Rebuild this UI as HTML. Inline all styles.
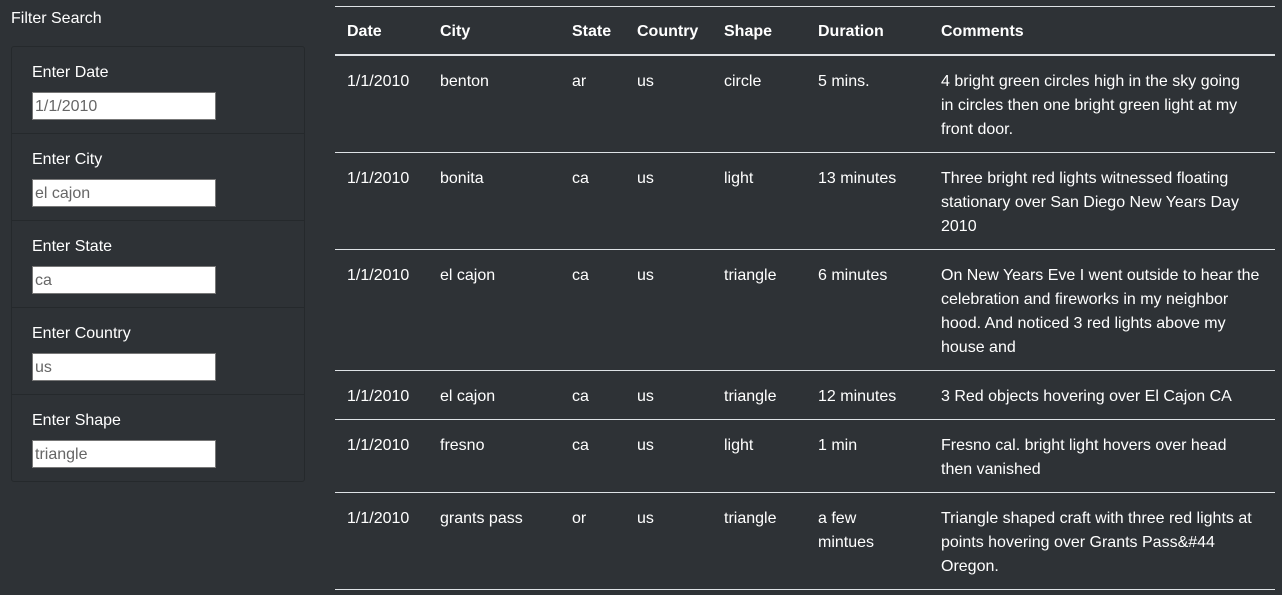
<!DOCTYPE html>
<html><head><style>
body{margin:0;background:#2e3236;font-family:"Liberation Sans",Helvetica,Arial,sans-serif;color:#fff;width:1282px;height:595px;overflow:hidden;position:relative}
.title{position:absolute;left:11px;top:10px;font-size:16px}
.panel{position:absolute;left:11px;top:46px;width:292px;height:434px;border:1px solid #25292c;border-radius:3px}
.grp{height:86px;border-bottom:1px solid #25292c;position:relative}
.grp:last-child{border-bottom:none}
.grp label{position:absolute;left:20px;top:17px;font-size:16px}
.grp .in{position:absolute;left:20px;top:45px;width:180px;height:26px;background:#fff;border:1px solid #777;color:#666;font-size:16px;line-height:27px;padding-left:2px}
table{position:absolute;left:335px;top:6px;width:940px;border-collapse:collapse;font-size:16px;border-top:1px solid #dee2e6}
th{text-align:left;font-weight:bold;padding:2px 11px 0 12px;height:45px;border-bottom:2px solid #dee2e6}
td{vertical-align:top;padding:14px 11px 10px 12px;line-height:24px;border-bottom:1px solid #dee2e6;white-space:nowrap}
</style></head><body>
<div class="title">Filter Search</div>
<div class="panel">
<div class="grp"><label>Enter Date</label><div class="in">1/1/2010</div></div>
<div class="grp"><label>Enter City</label><div class="in">el cajon</div></div>
<div class="grp"><label>Enter State</label><div class="in">ca</div></div>
<div class="grp"><label>Enter Country</label><div class="in">us</div></div>
<div class="grp"><label>Enter Shape</label><div class="in">triangle</div></div>
</div>
<table>
<colgroup><col style="width:93px"><col style="width:132px"><col style="width:65px"><col style="width:87px"><col style="width:94px"><col style="width:123px"><col></colgroup>
<tr><th>Date</th><th>City</th><th>State</th><th>Country</th><th>Shape</th><th>Duration</th><th>Comments</th></tr>
<tr><td>1/1/2010</td><td>benton</td><td>ar</td><td>us</td><td>circle</td><td>5 mins.</td><td>4 bright green circles high in the sky going<br>in circles then one bright green light at my<br>front door.</td></tr>
<tr><td>1/1/2010</td><td>bonita</td><td>ca</td><td>us</td><td>light</td><td>13 minutes</td><td>Three bright red lights witnessed floating<br>stationary over San Diego New Years Day<br>2010</td></tr>
<tr><td>1/1/2010</td><td>el cajon</td><td>ca</td><td>us</td><td>triangle</td><td>6 minutes</td><td>On New Years Eve I went outside to hear the<br>celebration and fireworks in my neighbor<br>hood. And noticed 3 red lights above my<br>house and</td></tr>
<tr><td>1/1/2010</td><td>el cajon</td><td>ca</td><td>us</td><td>triangle</td><td>12 minutes</td><td>3 Red objects hovering over El Cajon CA</td></tr>
<tr><td>1/1/2010</td><td>fresno</td><td>ca</td><td>us</td><td>light</td><td>1 min</td><td>Fresno cal. bright light hovers over head<br>then vanished</td></tr>
<tr><td>1/1/2010</td><td>grants pass</td><td>or</td><td>us</td><td>triangle</td><td>a few<br>mintues</td><td>Triangle shaped craft with three red lights at<br>points hovering over Grants Pass&amp;#44<br>Oregon.</td></tr>
</table>
</body></html>
